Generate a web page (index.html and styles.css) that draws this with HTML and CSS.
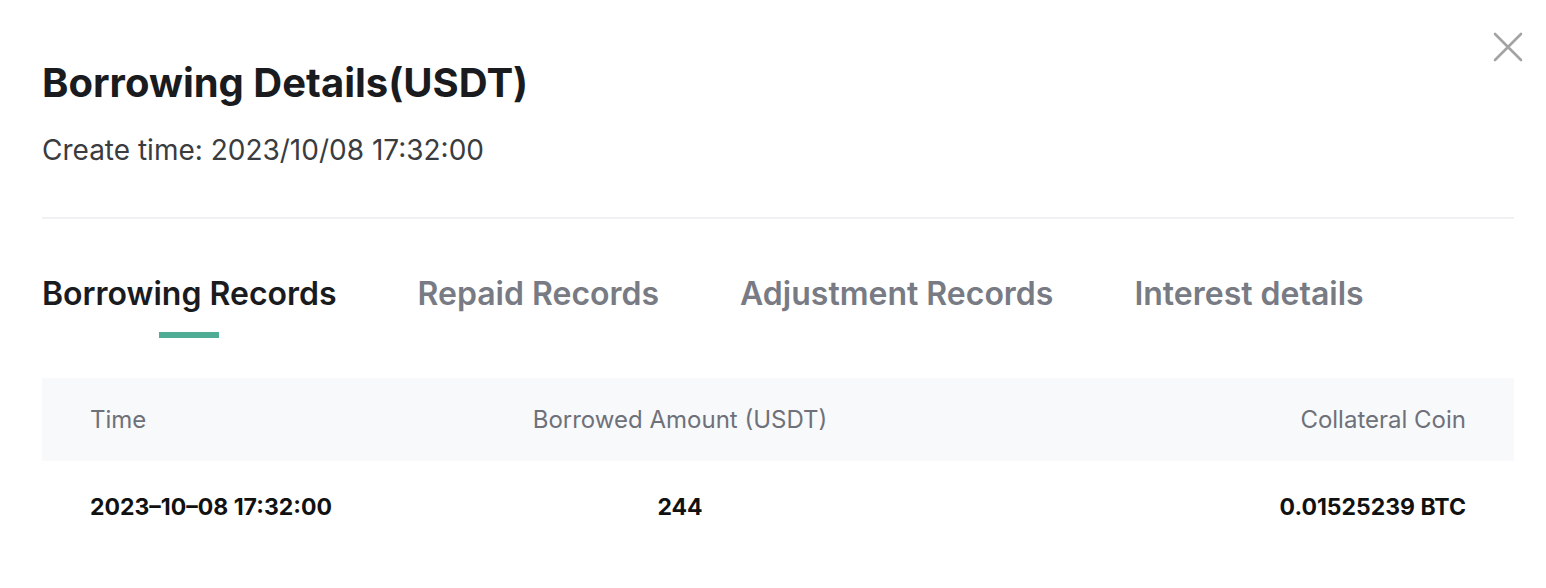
FILE: index.html
```html
<!DOCTYPE html>
<html lang="en">
<head>
  <meta charset="UTF-8" />
  <title>Borrowing Details</title>
  <meta name="viewport" content="width=device-width, initial-scale=1.0"/>
  <link rel="stylesheet" href="styles.css">
</head>
<body>
  <div class="modal">
    <button class="close" aria-label="Close">
      <svg width="30" height="30" viewBox="0 0 30 30">
        <path d="M2 2 L28 28 M28 2 L2 28" stroke="#a3a3a3" stroke-width="2.6" stroke-linecap="round" fill="none"/>
      </svg>
    </button>

    <h2 class="title">Borrowing Details(USDT)</h2>
    <div class="create-time">Create time: 2023/10/08 17:32:00</div>

    <div class="divider"></div>

    <!-- tabs -->
    <div class="tabs">
      <div class="tab active">Borrowing Records</div>
      <div class="tab">Repaid Records</div>
      <div class="tab">Adjustment Records</div>
      <div class="tab">Interest details</div>
    </div>

    <div class="table">
      <div class="row head">
        <div class="cell">Time</div>
        <div class="cell mid">Borrowed Amount (USDT)</div>
        <div class="cell end">Collateral Coin</div>
      </div>
      <div class="row">
        <div class="cell">2023–10–08 17:32:00</div>
        <div class="cell mid">244</div>
        <div class="cell end">0.01525239 BTC</div>
      </div>
    </div>
  </div>
</body>
</html>
```

FILE: styles.css
```css
body {
  margin: 0;
  font-family: Inter, "Noto Sans", sans-serif;
  background: #fff;
  color: #1a1b1e;
}
.modal {
  position: relative;
  padding: 57px 32px 0 42px;
}
.close {
  position: absolute;
  top: 32px;
  right: 23px;
  width: 30px;
  height: 30px;
  padding: 0;
  border: none;
  background: none;
  cursor: pointer;
}
.title {
  margin: 0;
  font-size: 40px;
  line-height: 52px;
  font-weight: 700;
}
.create-time {
  margin-top: 24px;
  font-size: 28px;
  line-height: 34px;
  color: #3a3c40;
}
.divider {
  height: 2px;
  background: #f0f1f2;
  margin-top: 50px;
}
.tabs {
  display: flex;
  gap: 81px;
  margin-top: 55px;
}
.tab {
  position: relative;
  font-size: 32px;
  line-height: 40px;
  font-weight: 600;
  color: #787b84;
  padding-bottom: 64px;
}
.tab.active {
  color: #1a1b1e;
}
.tab.active::after {
  content: "";
  position: absolute;
  left: 50%;
  bottom: 40px;
  width: 60px;
  height: 6px;
  margin-left: -30px;
  background: #4fad96;
}
.row {
  display: grid;
  grid-template-columns: 400px 380px 1fr;
  align-items: center;
  height: 92px;
  padding: 0 48px;
  font-size: 23px;
  font-weight: 700;
  color: #111;
}
.row.head {
  height: 83px;
  background: #f8f9fa;
  font-size: 24px;
  font-weight: 400;
  color: #6e717a;
}
.cell.mid {
  text-align: center;
}
.cell.end {
  text-align: right;
}
```
